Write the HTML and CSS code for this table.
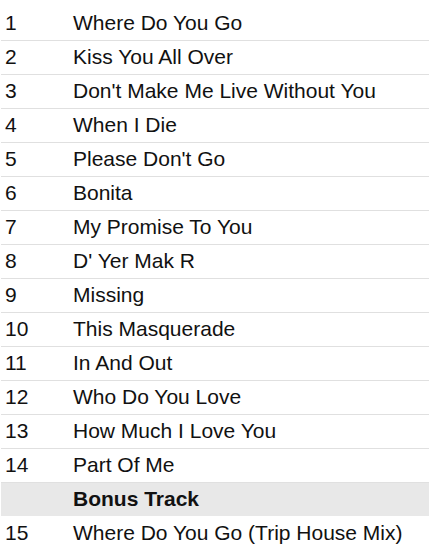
FILE: index.html
```html
<!DOCTYPE html>
<html lang="en">
<head>
    <meta charset="UTF-8">
    <title>Track listing</title>
    <link rel="stylesheet" href="styles.css">
</head>
<body>
    <div class="tracklist">
        <table class="tracks">
            <tr><td class="num">1</td><td>Where Do You Go</td></tr>
            <tr><td class="num">2</td><td>Kiss You All Over</td></tr>
            <tr><td class="num">3</td><td>Don't Make Me Live Without You</td></tr>
            <tr><td class="num">4</td><td>When I Die</td></tr>
            <tr><td class="num">5</td><td>Please Don't Go</td></tr>
            <tr><td class="num">6</td><td>Bonita</td></tr>
            <tr><td class="num">7</td><td>My Promise To You</td></tr>
            <tr><td class="num">8</td><td>D' Yer Mak R</td></tr>
            <tr><td class="num">9</td><td>Missing</td></tr>
            <tr><td class="num">10</td><td>This Masquerade</td></tr>
            <tr><td class="num">11</td><td>In And Out</td></tr>
            <tr><td class="num">12</td><td>Who Do You Love</td></tr>
            <tr><td class="num">13</td><td>How Much I Love You</td></tr>
            <tr><td class="num">14</td><td>Part Of Me</td></tr>
            <tr class="section"><td class="num"></td><td>Bonus Track</td></tr>
            <tr class="last"><td class="num">15</td><td>Where Do You Go (Trip House Mix)</td></tr>
        </table>
    </div>
</body>
</html>
```

FILE: styles.css
```css
* {
    margin: 0;
    padding: 0;
    box-sizing: border-box;
}

body {
    background: #fff;
    color: #111;
    font-family: 'Liberation Sans', Arial, sans-serif;
    font-size: 21px;
}

.tracklist {
    padding: 6px 0 0 1px;
}

.tracks {
    width: 100%;
    border-collapse: collapse;
}

.tracks td {
    height: 34px;
    padding: 0 0 0 4px;
    border-bottom: 1px solid #e0e0e0;
    vertical-align: middle;
    white-space: nowrap;
}

.tracks td.num {
    width: 68px;
}

.tracks .section td {
    background: #e8e8e8;
    font-weight: bold;
    border-bottom: none;
}

.tracks .last td {
    border-bottom: none;
}
```
